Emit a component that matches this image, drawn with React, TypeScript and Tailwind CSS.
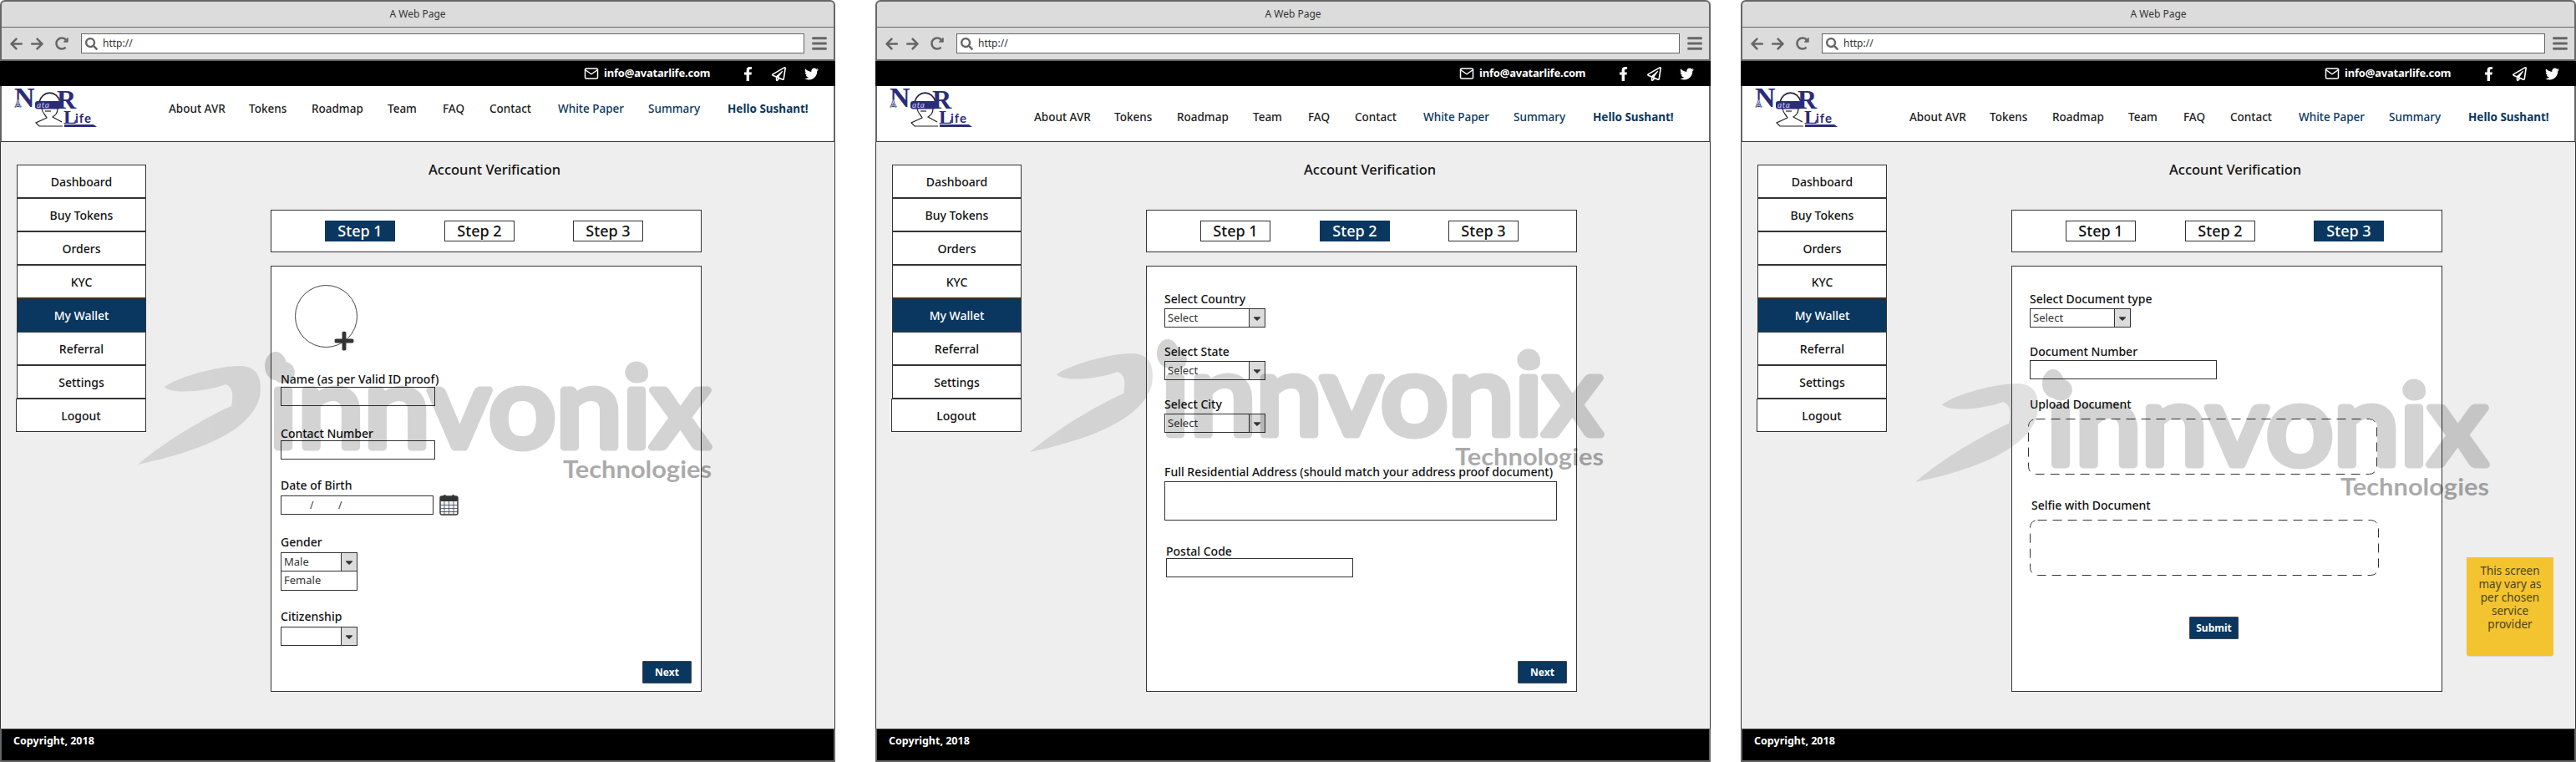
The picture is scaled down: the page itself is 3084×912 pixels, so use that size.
import type { ReactNode } from "react";
import { FaArrowLeft, FaArrowRight, FaBars, FaCaretDown, FaFacebookF, FaPlus, FaRedoAlt, FaRegPaperPlane, FaSearch, FaTwitter } from "react-icons/fa";
import { FiMail } from "react-icons/fi";

const NAVY = "#2b2c78";

const navItems = [
  { label: "About AVR", cls: "w-[96px] text-[#1c1c1c]" },
  { label: "Tokens", cls: "w-[75px] text-[#1c1c1c]" },
  { label: "Roadmap", cls: "w-[91px] text-[#1c1c1c]" },
  { label: "Team", cls: "w-[66px] text-[#1c1c1c]" },
  { label: "FAQ", cls: "w-[56px] text-[#1c1c1c]" },
  { label: "Contact", cls: "w-[82px] text-[#1c1c1c]" },
  { label: "White Paper", cls: "w-[108px] text-[#0a375f]" },
  { label: "Summary", cls: "w-[95px] text-[#0a375f]" },
  { label: "Hello Sushant!", cls: "w-[110px] font-bold text-[#0a375f]" },
];

const sideItems = ["Dashboard", "Buy Tokens", "Orders", "KYC", "My Wallet", "Referral", "Settings"];

function Logo() {
  return (
    <svg width="100" height="48" viewBox="0 0 100 48" className="shrink-0">
      <text x="0" y="23" fontSize="34" fontWeight="700" fontFamily="Liberation Serif, serif" fill={NAVY}>N</text>
      <text x="0" y="24" fontSize="12" fontWeight="700" fontFamily="Liberation Sans, sans-serif" fill={NAVY} stroke="#fff" strokeWidth="0.5">A</text>
      <path d="M30 17 A13 15 0 0 1 55 17" fill="none" stroke="#1d1d3f" strokeWidth="1.6" />
      <path d="M33 25 C34 31 38 33 39 36 L26 42 L30 46 L58 46 M52 25 C52 31 49 33 46 35 L57 41" fill="none" stroke="#222" strokeWidth="1.2" />
      <rect x="25" y="16" width="31" height="9.5" rx="3" fill={NAVY} />
      <text x="27" y="24" fontSize="10" fontStyle="italic" fontFamily="Lato, sans-serif" letterSpacing="0.6" fill="#c9cbee">ata</text>
      <path d="M37 28 L44 28" stroke="#222" strokeWidth="1.2" />
      <text x="51" y="25" fontSize="32" fontWeight="700" fontFamily="Liberation Serif, serif" fill={NAVY}>R</text>
      <text x="59" y="43" fontSize="24" fontWeight="700" fontFamily="Liberation Serif, serif" fill={NAVY}>L</text>
      <text x="73" y="42" fontSize="15" fontWeight="700" fontFamily="Lato, sans-serif" letterSpacing="1" fill={NAVY}>ife</text>
      <path d="M60 44 H95 L99 47 H60 Z" fill={NAVY} />
    </svg>
  );
}

function Watermark({ cls }: { cls: string }) {
  return (
    <svg width="1000" height="912" viewBox="0 0 1000 912" className={`pointer-events-none absolute top-0 left-0 z-10 ${cls}`}>
      <g opacity="0.17">
        <path d="M197 463 C215 450 265 437 290 438 C310 440 314 455 311 475 C302 510 255 537 165 556 C195 530 245 500 277 486 C280 470 278 463 270 460 C250 468 205 473 197 463 Z" fill="#555" />
        <ellipse cx="330" cy="438" rx="13" ry="17" fill="#000" />
        <ellipse cx="766" cy="449" rx="10" ry="9" fill="#000" />
        <text x="322" y="535" fontSize="134" fontWeight="400" fontFamily="Lato, sans-serif" textLength="528" lengthAdjust="spacingAndGlyphs" fill="#000" stroke="#000" strokeWidth="9" strokeLinejoin="round">innvonix</text>
      </g>
      <text x="674" y="572" fontSize="28" fontWeight="700" fontFamily="Lato, sans-serif" textLength="178" lengthAdjust="spacingAndGlyphs" fill="#000" opacity="0.33">Technologies</text>
    </svg>
  );
}

function Label({ cls, children }: { cls: string; children: ReactNode }) {
  return <div className={`h-[19px] text-[14px] leading-[19px] font-medium whitespace-nowrap text-[#111] ${cls}`}>{children}</div>;
}

function Box({ cls }: { cls: string }) {
  return <div className={`h-[23px] border border-[#333] bg-white ${cls}`} />;
}

function Select({ cls, value }: { cls: string; value?: string }) {
  return (
    <div className={`flex h-[23px] border border-[#333] bg-white ${cls}`}>
      <span className="flex-1 pl-[3px] text-[13px] leading-[20px] text-[#333]">{value}</span>
      <span className="flex w-[19px] items-center justify-center border-l border-[#333] bg-[#dcdcdc]">
        <FaCaretDown className="text-[14px] text-[#333]" />
      </span>
    </div>
  );
}

function Dashed({ cls }: { cls: string }) {
  return (
    <svg width="418" height="67" viewBox="0 0 418 67" className={`shrink-0 ${cls}`}>
      <rect x="0.5" y="0.5" width="417" height="66" rx="9" fill="none" stroke="#333" strokeDasharray="11 7" />
    </svg>
  );
}

function Calendar() {
  return (
    <svg width="23" height="25" viewBox="0 0 23 25" className="ml-[7px] shrink-0">
      <rect x="1" y="2" width="21" height="22" rx="2" fill="#eef3f8" stroke="#333" strokeWidth="1.4" />
      <rect x="1" y="2" width="21" height="6" rx="1.5" fill="#333" />
      <rect x="5" y="0" width="3" height="5" rx="1.5" fill="#333" />
      <rect x="15" y="0" width="3" height="5" rx="1.5" fill="#333" />
      <path d="M6 8V24M11.5 8V24M17 8V24M1 12.5H22M1 16.5H22M1 20.5H22" stroke="#445" strokeWidth="0.8" />
    </svg>
  );
}

function NextButton({ cls, children }: { cls: string; children: ReactNode }) {
  return (
    <div className={`flex h-[27px] w-[59px] items-center justify-center rounded-[1px] border border-[#445] bg-[#0a375f] text-[12px] font-bold text-white ${cls}`}>
      {children}
    </div>
  );
}

function Step1() {
  return (
    <>
      <div className="relative mt-[22px] ml-[28px] h-[75px] w-[75px] shrink-0 rounded-full border border-[#444]">
        <FaPlus className="absolute top-[53px] left-[45px] text-[26px] text-[#333]" />
      </div>
      <Label cls="mt-[28px] ml-[11px]">Name (as per Valid ID proof)</Label>
      <Box cls="ml-[11px] w-[185px]" />
      <Label cls="mt-[23px] ml-[11px]">Contact Number</Label>
      <Box cls="-mt-px ml-[11px] w-[185px]" />
      <Label cls="mt-[21px] ml-[11px]">Date of Birth</Label>
      <div className="mt-[2px] ml-[11px] flex items-center">
        <div className="relative h-[23px] w-[183px] border border-[#333] bg-white text-[12px] leading-[21px] text-[#333]">
          <span className="absolute left-[34px]">/</span>
          <span className="absolute left-[68px]">/</span>
        </div>
        <Calendar />
      </div>
      <Label cls="mt-[22px] ml-[11px]">Gender</Label>
      <Select cls="mt-[3px] ml-[11px] w-[92px]" value="Male" />
      <div className="ml-[11px] h-[23px] w-[92px] border border-t-0 border-[#333] bg-white pl-[3px] text-[13px] leading-[20px] text-[#333]">Female</div>
      <Label cls="mt-[21px] ml-[11px]">Citizenship</Label>
      <Select cls="mt-[3px] ml-[11px] w-[92px]" />
      <NextButton cls="mt-auto mr-[11px] mb-[9px] self-end">Next</NextButton>
    </>
  );
}

function Step2() {
  return (
    <>
      <Label cls="mt-[29px] ml-[21px]">Select Country</Label>
      <Select cls="mt-[2px] ml-[21px] w-[121px]" value="Select" />
      <Label cls="mt-[19px] ml-[21px]">Select State</Label>
      <Select cls="mt-[2px] ml-[21px] w-[121px]" value="Select" />
      <Label cls="mt-[19px] ml-[21px]">Select City</Label>
      <Select cls="mt-[2px] ml-[21px] w-[121px]" value="Select" />
      <Label cls="mt-[37px] ml-[21px]">Full Residential Address (should match your address proof document)</Label>
      <div className="mt-[2px] ml-[21px] h-[47px] w-[470px] border border-[#333] bg-white" />
      <Label cls="mt-[27px] ml-[23px]">Postal Code</Label>
      <Box cls="-mt-px ml-[23px] w-[224px]" />
      <NextButton cls="mt-auto mr-[11px] mb-[9px] self-end">Next</NextButton>
    </>
  );
}

function Step3() {
  return (
    <>
      <Label cls="mt-[29px] ml-[21px]">Select Document type</Label>
      <Select cls="mt-[2px] ml-[21px] w-[121px]" value="Select" />
      <Label cls="mt-[19px] ml-[21px]">Document Number</Label>
      <Box cls="mt-px ml-[21px] w-[224px]" />
      <Label cls="mt-[20px] ml-[21px]">Upload Document</Label>
      <Dashed cls="mt-[8px] ml-[19px]" />
      <Label cls="mt-[27px] ml-[23px]">Selfie with Document</Label>
      <Dashed cls="mt-[8px] ml-[21px]" />
      <NextButton cls="mt-[49px] ml-[212px]">Submit</NextButton>
    </>
  );
}

function StepPill({ active, cls = "", children }: { active: boolean; cls?: string; children: ReactNode }) {
  return (
    <div className={`flex h-[25px] w-[84px] items-center justify-center ${active ? "bg-[#0a375f] text-white" : "border border-[#333] bg-white text-[#111]"} ${cls}`}>
      {children}
    </div>
  );
}

function Frame({ step, navCls, wmCls, cls, children, note }: { step: number; navCls: string; wmCls: string; cls: string; children: ReactNode; note?: boolean }) {
  return (
    <div className={`relative flex h-[912px] w-[1000px] shrink-0 flex-col [font-family:'Noto_Sans',sans-serif] ${cls}`}>
      {/* browser chrome */}
      <div className="flex h-[33px] items-center justify-center rounded-t-[6px] border-x-2 border-t-2 border-b border-[#666] bg-[#dcdcdc] text-[12px] text-[#333]">A Web Page</div>
      <div className="flex h-[40px] items-center border-x-2 border-b-2 border-[#666] bg-[#dcdcdc] text-[#666]">
        <FaArrowLeft className="ml-[9px] text-[17px]" />
        <FaArrowRight className="ml-[8px] text-[17px]" />
        <FaRedoAlt className="ml-[13px] text-[16px]" />
        <div className="ml-[15px] flex h-[24px] w-[866px] items-center border border-[#666] bg-white">
          <FaSearch className="ml-[4px] text-[15px]" />
          <span className="ml-[6px] text-[12px] text-[#333]">http://</span>
        </div>
        <FaBars className="ml-[8px] text-[20px]" />
      </div>
      {/* top bar */}
      <div className="flex h-[30px] items-center bg-black text-white">
        <FiMail className="ml-[699px] text-[18px]" />
        <span className="ml-[6px] w-[128px] text-[13px] font-bold tracking-[-0.2px]">info@avatarlife.com</span>
        <FaFacebookF className="ml-[36px] text-[17px]" />
        <FaRegPaperPlane className="ml-[20px] text-[17px]" />
        <FaTwitter className="ml-[22px] text-[17px]" />
      </div>
      <div className="flex h-[67px] items-start border-x-2 border-b border-x-[#666] border-b-[#333] bg-white">
        <div className="mt-[2px] ml-[15px] w-[100px]"><Logo /></div>
        <div className={`flex text-[13.5px] leading-5 font-medium ${navCls}`}>
          {navItems.map((n) => (
            <span key={n.label} className={`whitespace-nowrap ${n.cls}`}>{n.label}</span>
          ))}
        </div>
      </div>
      {/* content */}
      <div className="relative flex flex-1 border-x border-[#333] bg-[#eeeeee]">
        <div className="mt-[27px] ml-[19px] flex w-[155px] shrink-0 flex-col">
          {sideItems.map((s) => (
            <div key={s} className={`flex h-[40px] items-center justify-center border border-[#333] text-[14px] font-medium ${s === "My Wallet" ? "bg-[#0a375f] font-bold text-white" : "bg-white text-[#111]"}`}>{s}</div>
          ))}
          <div className="-ml-px flex h-[40px] items-center justify-center border border-[#333] bg-white text-[14px] font-medium text-[#111]">Logout</div>
        </div>
        <div className="ml-[149px] flex w-[516px] flex-col">
          <div className="mt-[21px] h-[24px] pl-[189px] text-[16.5px] leading-6 font-medium whitespace-nowrap text-[#111]">Account Verification</div>
          <div className="mt-[36px] flex h-[51px] items-center border border-[#333] bg-white pl-[64px] text-[18px] font-medium">
            <StepPill active={step === 1}>Step 1</StepPill>
            <StepPill active={step === 2} cls="ml-[59px]">Step 2</StepPill>
            <StepPill active={step === 3} cls="ml-[70px]">Step 3</StepPill>
          </div>
          <div className="mt-[16px] flex h-[510px] flex-col border border-[#333] bg-white">{children}</div>
        </div>
        {note && (
          <div className="absolute top-[497px] left-[868px] z-20 h-[118px] w-[104px] rounded-b-[3px] bg-[#f3c42f] pt-[8px] text-center text-[13.5px] leading-[16px] text-[#4c4320] shadow-[0_1px_1px_rgba(0,0,0,0.1)]">
            This screen<br />may vary as<br />per chosen<br />service<br />provider
          </div>
        )}
      </div>
      <div className="flex h-[40px] items-start rounded-b-[1px] border-x-2 border-t border-b-2 border-x-[#666] border-t-[#444] border-b-[#666] bg-black pt-[5px] pl-[14px] text-[12.5px] font-bold text-white">Copyright, 2018</div>
      <Watermark cls={wmCls} />
    </div>
  );
}

export default function App() {
  return (
    <div className="flex h-[912px] w-[3084px] overflow-hidden bg-white">
      <Frame step={1} cls="" navCls="mt-[17px] ml-[85px]" wmCls="">
        <Step1 />
      </Frame>
      <Frame step={2} cls="ml-[48px]" navCls="mt-[27px] ml-[73px]" wmCls="translate-x-[20px] -translate-y-[15px]">
        <Step2 />
      </Frame>
      <Frame step={3} cls="ml-[36px]" navCls="mt-[27px] ml-[85px]" wmCls="translate-x-[44px] translate-y-[21px]" note>
        <Step3 />
      </Frame>
    </div>
  );
}
